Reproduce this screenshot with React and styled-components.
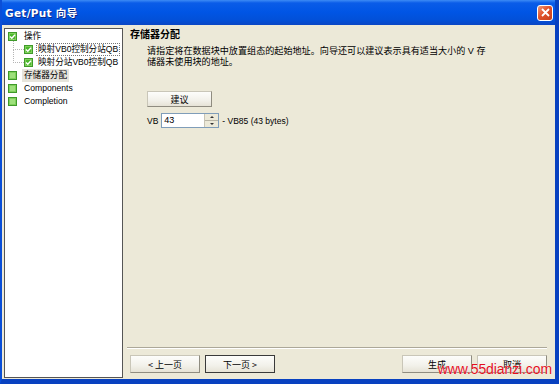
import React from 'react'
import styled, { createGlobalStyle } from 'styled-components'

const GlobalStyle = createGlobalStyle`
html, body {
margin: 0;
padding: 0;
background: #ece9d8;
}
body {
font-family: "Liberation Sans", "Noto Sans CJK SC", sans-serif;
font-size: 9px;
color: #000;
}
`

const Window = styled.div`
position: relative;
width: 559px;
height: 384px;
box-sizing: border-box;
display: flex;
flex-direction: column;
background: #ece9d8;
border-left: 2px solid #0a4fd8;
border-right: 4px solid #0841c0;
border-bottom: 5px solid #0841c0;
overflow: hidden;
`

const TitleBar = styled.div`
height: 25px;
flex: none;
margin-left: -2px;
margin-right: -4px;
display: flex;
align-items: center;
justify-content: space-between;
padding: 0 6px 0 5px;
background: linear-gradient(#3d8bf5 0px, #0a5ce8 3px, #0055e5 12px, #0250d8 20px, #0a46c4 25px);
`

const Title = styled.span`
color: #fff;
font-family: "DejaVu Sans", "Noto Sans CJK SC", sans-serif;
font-weight: bold;
font-size: 10.5px;
letter-spacing: 0.3px;
text-shadow: 1px 1px 0 #0a2a8a;
`

const CloseButton = styled.div`
width: 16px;
height: 16px;
box-sizing: border-box;
border: 1px solid #fff;
border-radius: 3px;
background: linear-gradient(135deg, #f09a7a, #e0522b 45%, #c8401c);
display: flex;
align-items: center;
justify-content: center;
`

const Body = styled.div`
flex: 1;
display: flex;
padding: 3px 0 1px 2px;
min-height: 0;
`

const TreePane = styled.div`
width: 119px;
flex: none;
box-sizing: border-box;
background: #fff;
border: 1px solid #555;
padding: 1px 0 0 3px;
overflow: hidden;
`

const TreeRow = styled.div`
position: relative;
height: 13px;
display: flex;
align-items: center;
gap: ${p => (p.$level ? 3 : 5)}px;
padding-left: ${p => p.$level * 16}px;
white-space: nowrap;
&::before {
content: '';
display: ${p => (p.$level ? 'block' : 'none')};
position: absolute;
left: 5px;
top: -6px;
width: 10px;
height: 12px;
border-left: 1px dotted #b5b5b5;
border-bottom: 1px dotted #b5b5b5;
}
`

const Label = styled.span`
font-family: "Liberation Sans", "Noto Sans CJK SC", sans-serif;
font-size: 8.6px;
line-height: 11px;
padding: 0 1px;
border: 1px ${p => (p.$focus ? 'dotted #777' : 'solid transparent')};
background: ${p => (p.$selected ? '#e6e4dc' : 'transparent')};
`

const Right = styled.div`
flex: 1;
display: flex;
flex-direction: column;
margin-left: 4px;
min-width: 0;
`

const Content = styled.div`
flex: 1;
padding: 0 0 0 3px;
`

const PageTitle = styled.div`
font-family: "Noto Sans CJK SC", sans-serif;
font-weight: bold;
font-size: 10px;
line-height: 12px;
`

const Description = styled.div`
margin: 6px 0 0 17px;
font-family: "Liberation Sans", "Noto Sans CJK SC", sans-serif;
font-size: 9.1px;
line-height: 11px;
white-space: nowrap;
`

const Button = styled.button`
box-sizing: border-box;
width: ${p => p.$width || 70}px;
height: ${p => p.$height || 18}px;
padding: 0;
font-family: "Noto Sans CJK SC", "Liberation Sans", sans-serif;
font-size: 9px;
color: #000;
background: linear-gradient(#fdfdfb, #f2f1ea 60%, #e6e3d6);
border: 1px solid #c9c6b8;
border-right-color: #8f8c80;
border-bottom-color: #8f8c80;
outline: ${p => (p.$default ? '1px solid #3a3a3a' : 'none')};
outline-offset: -1px;
border-radius: 0;
`

const SuggestButton = styled(Button)`
margin: 23px 0 0 17px;
display: block;
`

const VbRow = styled.div`
margin: 6px 0 0 17px;
display: flex;
align-items: center;
gap: 3px;
font-size: 8.5px;
`

const Spin = styled.div`
display: flex;
width: 58px;
height: 15px;
box-sizing: border-box;
border: 1px solid #7f9db9;
background: #fff;
`

const SpinValue = styled.div`
flex: 1;
font-size: 9px;
line-height: 13px;
padding-left: 2px;
`

const SpinArrows = styled.div`
width: 13px;
display: flex;
flex-direction: column;
border-left: 1px solid #c8c4b4;
`

const SpinArrow = styled.div`
flex: 1;
background: #ece9d8;
display: flex;
align-items: center;
justify-content: center;
border-bottom: ${p => (p.$up ? '1px solid #b8b4a4' : 'none')};
&::after {
content: '';
border-left: 2px solid transparent;
border-right: 2px solid transparent;
${p => (p.$up ? 'border-bottom: 2px solid #333;' : 'border-top: 2px solid #333;')}
}
`

const Footer = styled.div`
flex: none;
margin-right: 8px;
border-top: 1px solid #aca899;
box-shadow: inset 0 1px 0 #fff;
padding: 7px 0 5px 3px;
display: flex;
gap: 5px;
`

const Spacer = styled.div`
flex: 1;
`

const Watermark = styled.div`
position: absolute;
right: 3px;
bottom: 3px;
font-family: "Liberation Sans", sans-serif;
font-size: 14px;
line-height: 14px;
color: #e3101c;
letter-spacing: -0.1px;
text-shadow: 0 0 1px #fff;
`

const CheckIcon = ({ checked }) => (
  <svg width="9" height="9" viewBox="0 0 9 9" style={{ flex: 'none' }}>
    <rect x="0.5" y="0.5" width="8" height="8" fill="#7fd05a" stroke="#3f9a2a" />
    <rect x="2" y="2" width="5" height="5" fill={checked ? '#4cb82c' : '#9ee07c'} />
    {checked && <path d="M2 4.5 L3.8 6.3 L7 2.8" fill="none" stroke="#fff" strokeWidth="1.4" />}
  </svg>
)

const tree = [
  { level: 0, label: '操作', checked: true },
  { level: 1, label: '映射VB0控制分站QB', checked: true, focus: true },
  { level: 1, label: '映射分站VB0控制QB', checked: true },
  { level: 0, label: '存储器分配', selected: true },
  { level: 0, label: 'Components' },
  { level: 0, label: 'Completion' },
]

export default function App() {
  return (
    <>
      <GlobalStyle />
      <Window>
        <TitleBar>
          <Title>Get/Put 向导</Title>
          <CloseButton>
            <svg width="9" height="9" viewBox="0 0 9 9">
              <path d="M1 1 L8 8 M8 1 L1 8" stroke="#fff" strokeWidth="1.8" />
            </svg>
          </CloseButton>
        </TitleBar>
        <Body>
          <TreePane>
            {tree.map(item => (
              <TreeRow key={item.label} $level={item.level}>
                <CheckIcon checked={item.checked} />
                <Label $focus={item.focus} $selected={item.selected}>{item.label}</Label>
              </TreeRow>
            ))}
          </TreePane>
          <Right>
            <Content>
              <PageTitle>存储器分配</PageTitle>
              <Description>
                请指定将在数据块中放置组态的起始地址。向导还可以建议表示具有适当大小的 V 存
                <br />
                储器未使用块的地址。
              </Description>
              <SuggestButton $width={65} $height={16}>建议</SuggestButton>
              <VbRow>
                <span>VB</span>
                <Spin>
                  <SpinValue>43</SpinValue>
                  <SpinArrows>
                    <SpinArrow $up />
                    <SpinArrow />
                  </SpinArrows>
                </Spin>
                <span>- VB85 (43 bytes)</span>
              </VbRow>
            </Content>
            <Footer>
              <Button>&lt; 上一页</Button>
              <Button $default>下一页 &gt;</Button>
              <Spacer />
              <Button>生成</Button>
              <Button>取消</Button>
            </Footer>
          </Right>
        </Body>
        <Watermark>www.55dianzi.com</Watermark>
      </Window>
    </>
  )
}
